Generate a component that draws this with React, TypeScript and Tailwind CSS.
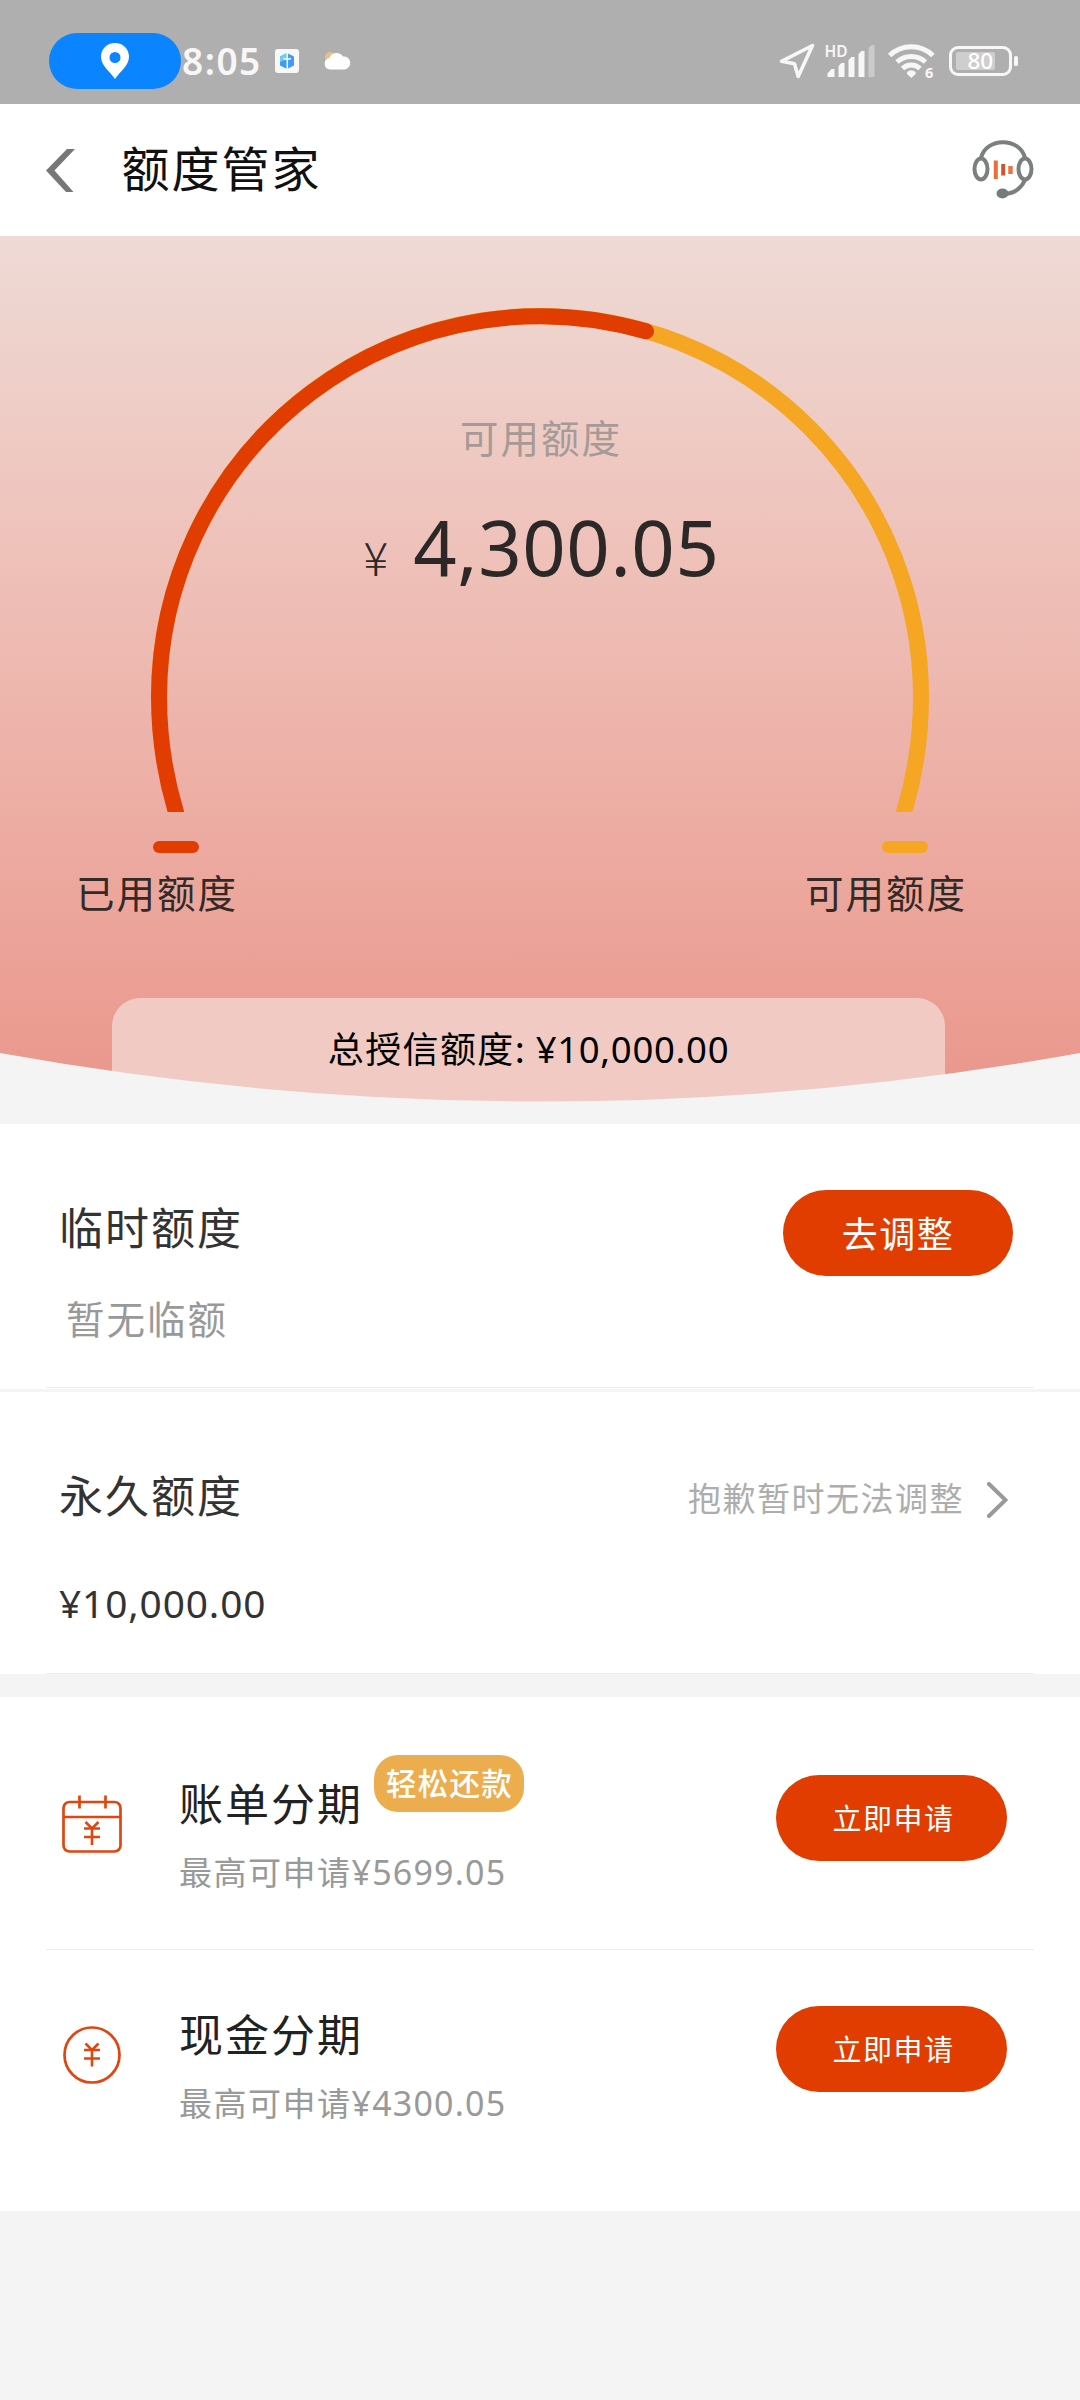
import type { ReactNode } from "react"

const installments = [
  {
    title: "账单分期",
    amount: "¥5699.05",
    tag: "轻松还款",
    icon: <CalendarIcon />,
  },
  {
    title: "现金分期",
    amount: "¥4300.05",
    tag: "",
    icon: <CoinIcon />,
  },
]

function Num({ children, className = "" }: { children: ReactNode; className?: string }) {
  return <span className={`font-['Noto_Sans','Noto_Sans_CJK_SC',sans-serif] ${className}`}>{children}</span>
}

function YuanMark() {
  return <path d="M23.500 27l6.500 6.500 6.500-6.500M22 33.500h16M22 42h16M30 33.500v16.500" strokeWidth="2.600" />
}

function CalendarIcon() {
  return (
    <svg width="60" height="58" viewBox="0 0 60 58" fill="none" stroke="#e0460f" strokeWidth="2.700">
      <rect x="1.500" y="7" width="57" height="49.500" rx="6" />
      <path d="M1 22h58M17.500 .5v13M43.500 .5v13" />
      <YuanMark />
    </svg>
  )
}

function CoinIcon() {
  return (
    <svg width="60" height="58" viewBox="0 0 60 58" fill="none" stroke="#e0460f" strokeWidth="2.700">
      <circle cx="30" cy="29" r="27.500" />
      <g transform="translate(0 -9.500)">
        <YuanMark />
      </g>
    </svg>
  )
}

function StatusBar() {
  return (
    <div className="flex h-[104px] items-center bg-[#afafaf] pt-[18px] pl-[49px]">
      <div className="flex h-[56px] w-[132px] items-center justify-center rounded-full bg-[#0b84ff]">
        <svg width="28" height="36" viewBox="0 0 28 36">
          <path
            fill="#fff"
            fillRule="evenodd"
            d="M14 0C6 0 0 6 0 13.800 0 23 9 28.500 14 36c5-7.500 14-13 14-22.200C28 6 22 0 14 0zm0 9a5.500 5.500 0 1 1 0 11 5.500 5.500 0 0 1 0-11z"
          />
        </svg>
      </div>
      <Num className="w-[94px] pl-px text-[37px] leading-[50px] font-semibold tracking-[1.500px] text-[#f7f7f7]">8:05</Num>
      <svg width="24" height="24" viewBox="0 0 24 24">
        <rect width="24" height="24" rx="3" fill="#f8f8f8" />
        <path d="M12 4l7 3.500v9L12 20l-7-3.500v-9z" fill="#3f9bf5" />
        <path d="M5 7.500L12 4v6l-7 3z" fill="#6ccdf8" />
        <path d="M12.300 4v16M8.500 9.500l3.500 1 4-1" stroke="#f3faff" strokeWidth="1.500" fill="none" />
      </svg>
      <svg className="ml-[24px]" width="28" height="20" viewBox="0 0 28 20">
        <circle cx="7" cy="6" r="5" fill="#e9c084" />
        <path
          d="M7 18.500a5.800 5.800 0 0 1-.5-11.500A7.500 7.500 0 0 1 20 5.500a6.500 6.500 0 0 1 1.500 13z"
          fill="#fff"
        />
      </svg>

      <svg className="ml-[428px]" width="36" height="36" viewBox="0 0 36 36">
        <path
          d="M33.500 2.500L2.500 18.300 15.500 20.800 19.200 33.500z"
          fill="none"
          stroke="#f7f7f7"
          strokeWidth="3.600"
          strokeLinejoin="round"
        />
      </svg>
      <svg className="ml-[8px] overflow-visible" width="53" height="34" viewBox="-2 0 53 34">
        <text x="-0.500" y="12.500" fontSize="15.500" fontWeight="600" fill="#f7f7f7" fontFamily="Noto Sans, sans-serif">
          HD
        </text>
        <g fill="#f7f7f7">
          <path d="M2.500 29.500l4-4.500h3v8h-7z" />
          <path d="M13.500 22l3-3h3v14h-6z" />
          <path d="M23.500 16l3-3h3v20h-6z" />
          <path d="M33.500 10l3-3h3v26h-6z" />
          <path d="M43.500 4l3-3h3v32h-6z" fill="#cbcbcb" />
        </g>
      </svg>
      <svg className="ml-[12px] overflow-visible" width="48" height="36" viewBox="0 0 48 36">
        <g fill="none" stroke="#f7f7f7" strokeWidth="5">
          <path d="M1.600 12.500a31 31 0 0 1 43.300 0" />
          <path d="M9 19a21 21 0 0 1 28.500 0" />
          <path d="M14.500 25.500a12.500 12.500 0 0 1 17.500 0" />
        </g>
        <path d="M19 29q4.300-3.500 8.600 0v2l-4.300 4-4.300-4z" fill="#f7f7f7" />
        <text x="37" y="34.500" fontSize="14.500" fontWeight="700" fill="#f7f7f7" fontFamily="Noto Sans, sans-serif">
          6
        </text>
      </svg>
      <svg className="ml-[13px]" width="70" height="32" viewBox="0 0 70 32">
        <rect x="1.500" y="2.500" width="60" height="27" rx="7.500" fill="none" stroke="#f7f7f7" strokeWidth="3" />
        <rect x="7" y="7" width="39" height="18" rx="2" fill="#cecece" />
        <rect x="65" y="11" width="4" height="10" rx="1.500" fill="#f7f7f7" />
        <text x="18.500" y="24" fontSize="22.500" fontWeight="500" fill="#fff" fontFamily="Noto Sans, sans-serif">
          80
        </text>
      </svg>
    </div>
  )
}

function Header() {
  return (
    <header className="flex h-[132px] items-center bg-white pr-[45px] pl-[46px]">
      <svg width="29" height="43" viewBox="0 0 29 43">
        <path d="M21 0h8L8.500 21.500 27.500 43h-7.500L0 21.500z" fill="#777" />
      </svg>
      <h1 className="ml-[46.5px] pb-[8px] text-[48px] leading-[64px] tracking-[2px] text-[#111]">额度管家</h1>
      <svg className="ml-auto" width="63" height="60" viewBox="0 0 63 60" fill="none" stroke="#7b7f80" strokeWidth="4">
        <path d="M9 18C14-3 48-3 53 18" />
        <ellipse cx="9" cy="29" rx="6.500" ry="10.500" />
        <ellipse cx="53" cy="29" rx="6.500" ry="10.500" />
        <path d="M53 40q-6 13-20 14" />
        <ellipse cx="30.500" cy="53.500" rx="6" ry="5" fill="#777b7c" stroke="none" />
        <path d="M23.800 20.500v18.500" stroke="#ee6c38" />
        <path d="M31.200 24v11.500" stroke="#c9592b" />
        <path d="M38.500 26v8" stroke="#ec7440" strokeWidth="4.500" />
      </svg>
    </header>
  )
}

// Left / right ends of the ring are cut flat by the bottom edge of the svg
function Gauge() {
  return (
    <svg className="col-start-1 row-start-1" width="1080" height="576" viewBox="0 0 1080 576" fill="none">
      <path d="M159 461a381 381 0 0 1 762 0q0 65-21 128" stroke="#f5a623" strokeWidth="16" />
      <path d="M180 589q-21-63-21-128a381 381 0 0 1 487-365.700" stroke="#e13d00" strokeWidth="16" strokeLinecap="round" />
    </svg>
  )
}

function QuotaSummary() {
  return (
    <section className="relative h-[866px] bg-linear-to-b from-[#eedad5] to-[#ea968b]">
      <div className="grid">
        <Gauge />
        <div className="col-start-1 row-start-1 flex flex-col items-center pt-[172px]">
          <p className="h-[56px] pl-[2px] text-[38.5px] leading-[56px] tracking-[2px] text-[#a69a97]">可用额度</p>
          <p className="mt-[33px] flex h-[100px] items-baseline pl-[3px] text-[#2b2827]">
            <span className="text-[46px] leading-[100px] font-light">¥</span>
            <Num className="ml-[25px] text-[76px] leading-[100px] tracking-[0.600px]">4,300.05</Num>
          </p>
        </div>
      </div>

      <div className="flex justify-between pt-[29px] pr-[113px] pl-[76px] text-[38.5px] leading-[56px] tracking-[2px] text-[#332a27]">
        <div>
          <div className="ml-[77px] h-[12px] w-[46px] rounded-full bg-[#e13d00]" />
          <p className="mt-[10px]">已用额度</p>
        </div>
        <div>
          <div className="ml-[77px] h-[12px] w-[46px] rounded-full bg-[#f5a623]" />
          <p className="mt-[10px]">可用额度</p>
        </div>
      </div>

      <div className="mt-[79px] ml-[112px] h-[104px] w-[833px] rounded-t-[28px] bg-[#f1cbc3] pt-[23px] text-center text-[36px] leading-[52px] tracking-[1.400px] text-black">
        总授信额度: <Num className="text-[36.500px] tracking-[0.700px]">¥10,000.00</Num>
      </div>

      <svg className="absolute bottom-0 left-0" width="1080" height="49" viewBox="0 0 1080 49">
        <path d="M0 0Q540 97 1080 0V49H0z" fill="#f4f4f4" />
      </svg>
    </section>
  )
}

function Divider() {
  return <div className="mx-[46px] h-px bg-[#ededed]" />
}

export default function App() {
  return (
    <div className="min-h-[2400px] w-[1080px] bg-[#f4f4f4] font-['Noto_Sans_CJK_SC','Noto_Sans',sans-serif]">
      <StatusBar />
      <Header />
      <QuotaSummary />

      <section className="mt-[22px] flex h-[265px] flex-col justify-between bg-white">
        <div className="flex justify-between pr-[67px] pl-[59px]">
          <div className="pt-[72px]">
            <h2 className="text-[44px] leading-[60px] tracking-[2px] text-[#333]">临时额度</h2>
            <p className="mt-[34px] ml-[7px] text-[38.5px] leading-[54px] tracking-[2px] text-[#999]">暂无临额</p>
          </div>
          <button className="mt-[66px] h-[86px] w-[230px] rounded-full bg-[#e13d00] pb-[3px] text-[36px] tracking-[1.500px] text-white">
            去调整
          </button>
        </div>
        <div className="pb-px">
          <Divider />
        </div>
      </section>

      <section className="mt-[3px] flex h-[282px] flex-col justify-between bg-white">
        <div className="pt-[72px] pr-[72px] pl-[59px]">
          <div className="flex items-center justify-between">
            <h2 className="text-[44px] leading-[60px] tracking-[2px] text-[#333]">永久额度</h2>
            <div className="flex h-[60px] items-center gap-[23px] pt-[11px]">
              <span className="pb-[5px] text-[33px] leading-[46px] tracking-[1.500px] text-[#adadad]">抱歉暂时无法调整</span>
              <svg width="21" height="36" viewBox="0 0 21 36">
                <path d="M2 2l16.500 16L2 34" fill="none" stroke="#999" strokeWidth="4" strokeLinecap="round" />
              </svg>
            </div>
          </div>
          <Num className="mt-[52px] block text-[38.800px] leading-[54px] tracking-[0.900px] text-[#333]">¥10,000.00</Num>
        </div>
        <Divider />
      </section>

      <section className="mt-[23px] h-[514px] bg-white">
        {installments.map((item, index) => (
          <div key={item.title}>
            {index > 0 && <Divider />}
            <div className={`flex pr-[73px] pl-[62px] ${index > 0 ? "h-[230px] pt-[56px]" : "h-[252px] pt-[78px]"}`}>
              <div className="mt-[20px]">{item.icon}</div>
              <div className="-mt-[3px] ml-[57px]">
                <div className="flex h-[60px] items-start">
                  <h2 className="text-[44px] leading-[60px] tracking-[2px] text-[#222]">{item.title}</h2>
                  {item.tag && (
                    <span className="-mt-[17px] ml-[11px] h-[57px] w-[150px] rounded-[24px] bg-[#ecad4f] pl-px text-center text-[30.500px] leading-[55px] font-medium tracking-[1.300px] text-white">
                      {item.tag}
                    </span>
                  )}
                </div>
                <p className="mt-[16px] h-[46px] text-[33px] leading-[46px] tracking-[1.500px] text-[#999]">
                  最高可申请<Num className="text-[34px] tracking-[1.200px]">{item.amount}</Num>
                </p>
              </div>
              <button className="ml-auto h-[86px] w-[231px] rounded-full bg-[#e13d00] pb-px pl-[9px] text-[29px] tracking-[1.500px] text-white">
                <span className="-ml-[5px]">立即申请</span>
              </button>
            </div>
          </div>
        ))}
      </section>
    </div>
  )
}
